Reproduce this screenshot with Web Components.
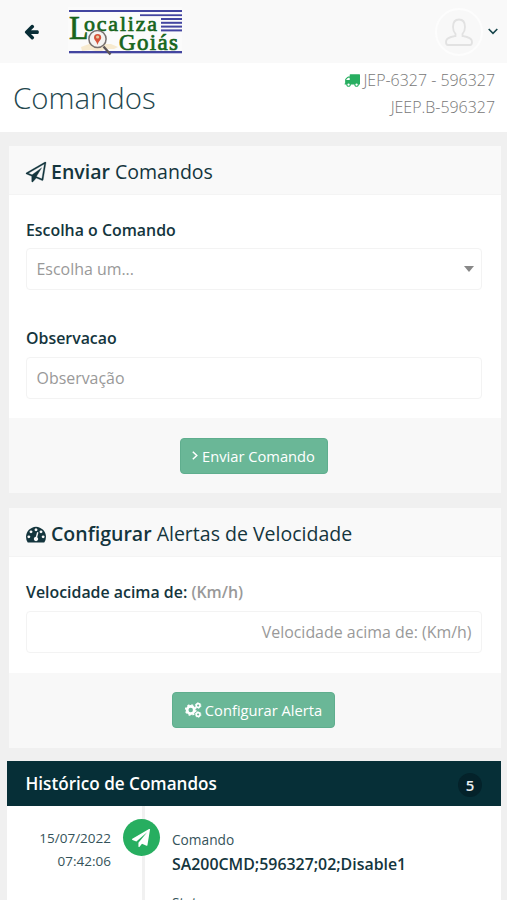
<!DOCTYPE html>
<html lang="pt-BR">
<head>
<meta charset="utf-8">
<title>Comandos</title>
<style>
html,body{margin:0;height:900px;overflow:hidden;background:#f0f0f0}
body{font-family:"Open Sans","Noto Sans",sans-serif;color:#14353d;font-size:15.3px}
</style>
</head>
<body>
<command-page></command-page>
<script>
const define = (name, html) => customElements.define(name, class extends HTMLElement {
  constructor() {
    super();
    const t = document.createElement('template');
    t.innerHTML = html;
    this.attachShadow({ mode: 'open' }).append(t.content.cloneNode(true));
  }
});

const ICONS = {
  plane: '<path d="M1764 11q33 24 27 64l-256 1536q-5 29-32 45-14 8-31 8-11 0-24-5l-453-185-242 295q-18 23-49 23-13 0-22-4-19-7-30.5-23.5t-11.5-36.5v-349l864-1059-1069 925-395-162q-37-14-40-55-2-40 32-59l1664-960q15-9 32-9 20 0 36 11z"/>',
  planeOutline: '<path stroke="currentColor" stroke-width="25" d="M1764 11q33 24 27 64l-256 1536q-5 29-32 45-14 8-31 8-11 0-24-5l-527-215-298 327q-18 21-47 21-14 0-23-4-19-7-30-23.5t-11-36.5v-452l-472-193q-37-14-40-55-3-39 32-59l1664-960q35-21 68 2zm-342 1499l221-1323-1434 827 336 137 863-639-478 797z"/>',
  gauge: '<path d="M384 1152q0-53-37.5-90.5t-90.5-37.5-90.5 37.5-37.5 90.5 37.5 90.5 90.5 37.5 90.5-37.5 37.5-90.5zm192-448q0-53-37.5-90.5t-90.5-37.5-90.5 37.5-37.5 90.5 37.5 90.5 90.5 37.5 90.5-37.5 37.5-90.5zm428 481l101-382q6-26-7.5-48.5t-38.5-29.5-48 6.500-30 39.500l-101 382q-60 5-107 43.500t-63 98.500q-20 77 20 146t117 89 146-20 89-117q16-60-6-117t-72-91zm660-33q0-53-37.500-90.500t-90.500-37.500-90.500 37.500-37.500 90.500 37.500 90.500 90.500 37.500 90.500-37.500 37.500-90.500zm-640-640q0-53-37.500-90.500t-90.500-37.500-90.500 37.500-37.500 90.500 37.500 90.500 90.500 37.500 90.500-37.500 37.500-90.500zm448 192q0-53-37.500-90.500t-90.500-37.500-90.500 37.500-37.500 90.500 37.500 90.500 90.500 37.500 90.500-37.500 37.500-90.500zm320 448q0 261-141 483-19 29-54 29h-1402q-35 0-54-29-141-221-141-483 0-182 71-348t191-286 286-191 348-71 348 71 286 191 191 286 71 348z"/>',
  truck: '<path d="M640 1408q0-52-38-90t-90-38-90 38-38 90 38 90 90 38 90-38 38-90zm-384-512h384v-256h-158q-13 0-22 9l-195 195q-9 9-9 22v30zm1280 512q0-52-38-90t-90-38-90 38-38 90 38 90 90 38 90-38 38-90zm256-1088v1024q0 15-4 26.500t-13.500 18.500-16.500 11.500-23.500 6-22.500 2-25.500 0-22.500-.5q0 106-75 181t-181 75-181-75-75-181h-384q0 106-75 181t-181 75-181-75-75-181h-64q-3 0-22.500.5t-25.500 0-22.500-2-23.500-6-16.500-11.500-13.500-18.500-4-26.500q0-26 19-45t45-19v-320q0-8-.5-35t0-38 2.500-34.500 6.500-37 14-30.500 22.500-30l198-198q19-19 50.500-32t58.500-13h160v-192q0-26 19-45t45-19h1024q26 0 45 19t19 45z"/>',
  arrow: '<path d="M1664 896v128q0 53-32.500 90.500t-84.500 37.500h-704l293 294q38 36 38 90t-38 90l-75 76q-37 37-90 37-52 0-91-37l-651-652q-37-37-37-90 0-52 37-91l651-650q38-38 91-38 52 0 90 38l75 74q38 38 38 91t-38 91l-293 293h704q52 0 84.500 37.500t32.500 90.500z"/>',
  cogs: '<g fill="none" stroke="currentColor"><circle cx="640" cy="896" r="400" stroke-width="300"/><circle cx="640" cy="896" r="580" stroke-width="150" stroke-dasharray="228 228"/><circle cx="1470" cy="400" r="215" stroke-width="180"/><circle cx="1470" cy="400" r="320" stroke-width="80" stroke-dasharray="168 168"/><circle cx="1470" cy="1400" r="215" stroke-width="180"/><circle cx="1470" cy="1400" r="320" stroke-width="80" stroke-dasharray="168 168"/></g>'
};
customElements.define('ui-icon', class extends HTMLElement {
  constructor() { super(); this.attachShadow({ mode: 'open' }); }
  connectedCallback() {
    this.shadowRoot.innerHTML = `<style>:host{display:block;flex:none;width:var(--s,16px);height:var(--s,16px)}svg{display:block;width:100%;height:100%;overflow:visible;fill:currentColor}</style><svg viewBox="0 0 1792 1792">${ICONS[this.getAttribute('name')]}</svg>`;
  }
});

define('brand-logo', `<style>:host{display:block;width:116px;height:50px}svg{display:block}</style>
<svg width="116" height="50" viewBox="68 7 116 50">
<rect x="68" y="7" width="114" height="49" fill="#fbfbfb"/>
<g fill="#f5dfb2" opacity=".6"><path d="M81 47l8-3 2-4h6l4 4h10l7 3-4 2h-9l-5 3-9-2-9 1z"/></g>
<g fill="#4345a0"><rect x="69" y="10" width="113" height="2"/><rect x="140" y="14.300" width="42" height="1.800"/><rect x="161" y="18" width="21" height="2"/><rect x="161" y="21.800" width="21" height="2"/><rect x="161" y="25.600" width="21" height="2"/><rect x="161" y="29.400" width="21" height="2"/><rect x="69" y="51" width="113" height="2.300"/></g>
<g font-family="'Liberation Serif',serif" fill="#17651b" stroke="#17651b">
<text x="69" y="38.500" font-size="33" textLength="19.500" lengthAdjust="spacingAndGlyphs" stroke-width=".7">L</text>
<text x="84" y="30.500" font-size="22" textLength="73" lengthAdjust="spacing" stroke-width=".7">ocaliza</text>
<text x="119" y="49.500" font-size="23" textLength="59" lengthAdjust="spacing" stroke-width=".7">Goiás</text></g>
<circle cx="97.500" cy="39" r="8.600" fill="#f4f3f1" stroke="#77706e" stroke-width="1.500"/>
<path d="M97.500 45c-1-4-3.500-5-3.500-7.500a3.600 3.600 0 0 1 7.200 0c0 2.500-2.700 3.500-3.700 7.500z" fill="#d5553c"/><circle cx="97.600" cy="37" r="1.600" fill="#e9c9a0"/>
<path d="M103.500 46.500l7 8" stroke="#5d5557" stroke-width="2.400"/>
</svg>`);

define('top-bar', `<style>
:host{display:flex;align-items:center;height:63px;box-sizing:border-box;background:#f9f9f9;padding:0 9px 0 23px}
ui-icon{--s:17px;color:#082d36}
brand-logo{margin-left:28px}
.user{margin-left:auto;display:flex;align-items:center;gap:5px}
</style>
<ui-icon name="arrow"></ui-icon><brand-logo></brand-logo>
<div class="user">
<svg width="48" height="48" viewBox="0 0 48 48" fill="none"><circle cx="24" cy="24" r="23" fill="#f8f8f8" stroke="#fdfdfd" stroke-width="2"/><path d="M24 11.500c-4 0-6 3-6 7.500 0 3 1 5.300 2.500 6.800v2.200c-4 .8-9.500 1.500-9.500 6 0 1.800.8 3 2 3h22c1.200 0 2-1.200 2-3 0-4.500-5.500-5.200-9.500-6v-2.200c1.500-1.500 2.500-3.800 2.500-6.800 0-4.500-2-7.500-6-7.500z" stroke="#e2e2e2" stroke-width="1.800"/></svg>
<svg width="10" height="7" viewBox="0 0 10 7" fill="none" stroke="#17454b" stroke-width="1.600"><path d="M.7 1l4.300 4.300L9.300 1"/></svg>
</div>`);

define('page-title', `<style>
:host{display:flex;justify-content:space-between;height:69px;box-sizing:border-box;background:#fff;padding:0 12px 0 13px}
h1{margin:0;font-size:29.400px;font-weight:300;line-height:71px;color:#24474e}
.v{display:flex;flex-direction:column;align-items:flex-end;padding-top:4px;font-size:15.950px;font-weight:300;line-height:26.500px;color:#777}
.r{display:flex;align-items:center;gap:3px}
ui-icon{--s:16px;color:#27ae60}
</style><h1><span>Comandos</span></h1>
<div class="v"><div class="r"><ui-icon name="truck"></ui-icon><span>JEP-6327 - 596327</span></div><div><span>JEEP.B-596327</span></div></div>`);

define('form-panel', `<style>
:host{display:flex;flex-direction:column;background:#fff;margin:0 6.500px 0 8.500px}
header{display:flex;align-items:center;gap:5px;height:49px;background:#f9f9f9;border-bottom:1px solid #f4f4f4;box-sizing:border-box;padding:3px 18px 0 17.500px;font-size:19.530px;color:#14353d}
::slotted(ui-icon){--s:20px}
.b{flex:1;display:flex;flex-direction:column;padding:0 18.500px 0 17.500px}
footer{height:75px;background:#f8f8f8;display:flex;align-items:center;justify-content:center;padding:var(--f,0 2px 1px 0);box-sizing:border-box}
</style><header><slot name="icon"></slot><div><slot name="title"></slot></div></header><div class="b"><slot></slot></div><footer><slot name="action"></slot></footer>`);

define('form-field', `<style>
:host{display:block}
.l{font-weight:600;font-size:15.900px;line-height:22px;margin-bottom:var(--g,6px);color:#14353d}
.box{display:flex;align-items:center;justify-content:var(--j,space-between);height:42px;box-sizing:border-box;border:1.500px solid #f3f3f3;border-radius:4px;padding:0 9.500px 1px;font-size:15.930px;color:#999}
</style><div class="l"><slot name="label"></slot></div><div class="box"><slot></slot></div>`);

define('action-button', `<style>
:host{display:flex;align-items:center;justify-content:center;gap:4px;height:36px;width:var(--w);box-sizing:border-box;border:1px solid #5fae8e;border-radius:4px;background:#6ab797;color:#fff;font-size:14.700px;padding-bottom:1px}
</style><slot></slot>`);

define('history-panel', `<style>
:host{display:block;margin:0 6px 0 7px;background:#fff;height:139px;overflow:hidden}
header{height:45px;background:#062f37;color:#fff;display:flex;align-items:center;justify-content:space-between;padding:0 19px 0 18.500px;box-sizing:border-box;font-size:17.100px;font-weight:600}
header span{padding-bottom:1px}
b{width:24px;height:24px;border-radius:50%;background:#04222a;display:grid;place-items:center;font-size:15px;font-weight:600;color:#e8eef0;margin-top:3px}
.row{display:grid;grid-template-columns:104px 62px 1fr;height:94px}
.d{text-align:right;padding-top:21px;font-size:13.500px;line-height:22.500px;color:#35535a}
.line{display:flex;justify-content:center;align-items:flex-start;padding-top:13px;background:linear-gradient(#f1f1f1,#f1f1f1) 31px 0/3px 100% no-repeat}
.dot{width:37px;height:37px;border-radius:50%;background:#27ae60;color:#fff;display:grid;place-items:center;margin-right:2px}
.dot ui-icon{--s:18px}
.c{font-size:13.700px;line-height:24px;padding-top:22px;color:#35535a;margin-left:-1px}
.c strong{display:block;font-size:15.900px;font-weight:600;line-height:24px;color:#14353d}
.s{margin-top:15px}
</style><header><span>Histórico de Comandos</span><b>5</b></header>
<div class="row"><div class="d"><span>15/07/2022</span><br><span>07:42:06</span></div><div class="line"><div class="dot"><ui-icon name="plane"></ui-icon></div></div>
<div class="c"><span>Comando</span><strong><span>SA200CMD;596327;02;Disable1</span></strong><div class="s"><span>Status</span></div></div></div>`);

define('command-page', `<style>
:host{display:block;width:507px;height:900px;overflow:hidden}
.send{height:347px;margin-top:14px;margin-bottom:15px;--f:1px 2px 0 0}
.speed{height:240px;margin-bottom:13px}
h2{display:inline;font:inherit;margin:0}h2 b{font-weight:600}
.f1{margin-top:24px;--g:7px}.f2{margin-top:37px;--g:8px}.f3{margin-top:24px;--g:8px;--j:flex-end}
i{font-style:normal;color:#999}
.car{width:0;height:0;border:5px solid transparent;border-top:6px solid #888;border-bottom:0;margin-right:-2px}
</style>
<top-bar></top-bar><page-title></page-title>
<form-panel class="send"><ui-icon slot="icon" name="planeOutline"></ui-icon><h2 slot="title"><b>Enviar</b> Comandos</h2>
<form-field class="f1"><span slot="label">Escolha o Comando</span><span>Escolha um...</span><div class="car"></div></form-field>
<form-field class="f2"><span slot="label">Observacao</span><span>Observação</span></form-field>
<action-button slot="action" style="--w:148px"><svg width="6" height="9" viewBox="0 0 6 9" fill="none" stroke="#fff" stroke-width="1.500"><path d="M.8.7l4 3.800-4 3.800"/></svg><span>Enviar Comando</span></action-button></form-panel>
<form-panel class="speed"><ui-icon slot="icon" name="gauge"></ui-icon><h2 slot="title"><b>Configurar</b> Alertas de Velocidade</h2>
<form-field class="f3"><span slot="label">Velocidade acima de: <i>(Km/h)</i></span><span>Velocidade acima de: (Km/h)</span></form-field>
<action-button slot="action" style="--w:163px"><ui-icon name="cogs"></ui-icon><span>Configurar Alerta</span></action-button></form-panel>
<history-panel></history-panel>`);
</script>
</body>
</html>
